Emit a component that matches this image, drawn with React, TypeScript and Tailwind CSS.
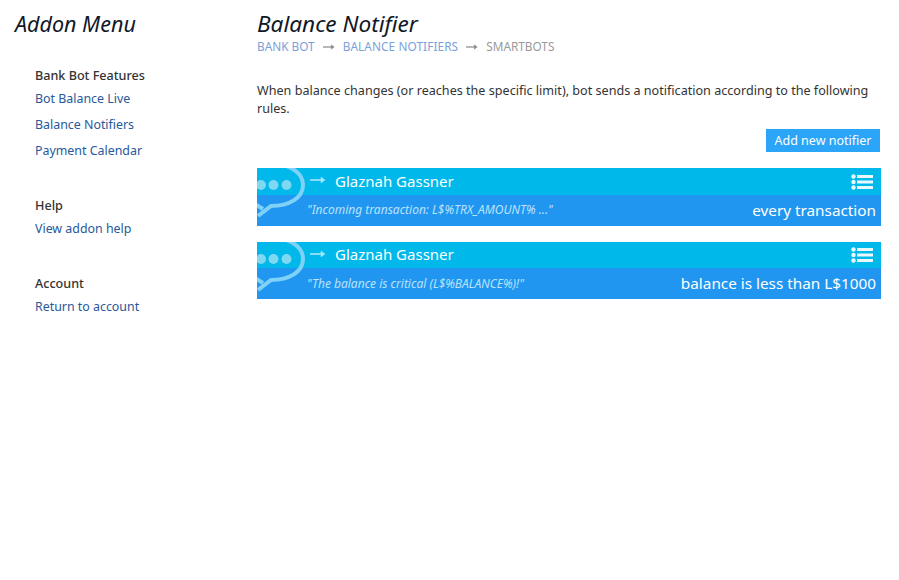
import React from "react";

const font = { fontFamily: '"Noto Sans", sans-serif' };

function SideGroup({ title, links, className }: { title: string; links: string[]; className?: string }) {
  return (
    <div className={className}>
      <div className="text-[12.6px] leading-[18px] font-medium text-[#333333]">{title}</div>
      <div className="mt-[5px] flex flex-col gap-[8px]">
        {links.map((l) => (
          <a key={l} className="text-[12.4px] leading-[18px] text-[#27589b]">
            {l}
          </a>
        ))}
      </div>
    </div>
  );
}

function Arrow({ className }: { className?: string }) {
  return (
    <svg viewBox="0 0 16 10" className={className} fill="none" stroke="currentColor">
      <path d="M0 5h13" strokeWidth="1.6" />
      <path d="M11 2l4 3-4 3z" fill="currentColor" strokeWidth="0.5" />
    </svg>
  );
}

function Bubble() {
  return (
    <svg width="50" height="57" viewBox="0 0 50 57" className="absolute left-0 top-0" fill="none">
      <path d="M10 -4C32 -5 46 4 46 17C46 30 32 38 14 38L1 48" stroke="#7fd2f7" strokeWidth="4" />
      <path d="M-2 36L6 41" stroke="#7fd2f7" strokeWidth="4" />
      <circle cx="4" cy="17" r="5" fill="#7fd8f2" />
      <circle cx="16.5" cy="17" r="5" fill="#7fd8f2" />
      <circle cx="29.5" cy="17" r="5" fill="#7fd8f2" />
    </svg>
  );
}

function ListIcon() {
  return (
    <svg width="22" height="16" viewBox="0 0 22 16" fill="#e8f8fd">
      <circle cx="2.5" cy="2.5" r="2.2" />
      <circle cx="2.5" cy="8" r="2.2" />
      <circle cx="2.5" cy="13.5" r="2.2" />
      <rect x="6" y="1" width="16" height="3" />
      <rect x="6" y="6.5" width="16" height="3" />
      <rect x="6" y="12" width="16" height="3" />
    </svg>
  );
}

function Card({ quote, rule, topH, nameClass, quoteClass }: { quote: string; rule: string; topH: string; nameClass: string; quoteClass: string }) {
  return (
    <div className="relative overflow-hidden w-[624px]">
      <div className={`${topH} bg-[#00b8e9] flex items-center pl-[53px] pr-[8px]`}>
        <Arrow className="w-[16px] h-[10px] text-[#a5e6f7] -mt-[3px]" />
        <span className={`ml-[9px] text-[15px] text-white ${nameClass}`}>Glaznah Gassner</span>
        <span className="ml-auto">
          <ListIcon />
        </span>
      </div>
      <div className="h-[31px] bg-[#2196f0] flex items-center pl-[50px] pr-[5px]">
        <span className={`italic text-[12px] text-[#b9e2fb] ${quoteClass}`}>{quote}</span>
        <span className="ml-auto text-[15.3px] text-white">{rule}</span>
      </div>
      <Bubble />
    </div>
  );
}

export default function App() {
  return (
    <div className="flex min-h-[580px] w-[899px] bg-white" style={font}>
      <aside className="w-[257px] shrink-0 pl-[15px] pt-[10px]">
        <h2 className="text-[21.5px] leading-[28px] italic text-[#111827]">Addon Menu</h2>
        <SideGroup className="mt-[29px] ml-[20px]" title="Bank Bot Features" links={["Bot Balance Live", "Balance Notifiers", "Payment Calendar"]} />
        <SideGroup className="mt-[37px] ml-[20px]" title="Help" links={["View addon help"]} />
        <SideGroup className="mt-[37px] ml-[20px]" title="Account" links={["Return to account"]} />
      </aside>
      <main className="w-[624px] pt-[10px]">
        <h1 className="text-[22.6px] leading-[28px] italic text-[#111827]">Balance Notifier</h1>
        <div className="flex items-center h-[18px] text-[11.8px] text-[#7ba1d9]">
          <span>BANK BOT</span>
          <Arrow className="w-[12px] h-[8px] mx-[8px] text-[#888888]" />
          <span className="tracking-[0.1px]">BALANCE NOTIFIERS</span>
          <Arrow className="w-[12px] h-[8px] mx-[8px] text-[#888888]" />
          <span className="text-[#999999]">SMARTBOTS</span>
        </div>
        <p className="mt-[26px] text-[12.6px] leading-[18px] text-[#333333]">
          When balance changes (or reaches the specific limit), bot sends a notification according to the following rules.
        </p>
        <div className="mt-[11px] flex justify-end pr-[1px]">
          <button className="h-[23px] w-[114px] bg-[#2ba5f7] pt-px text-[12.5px] text-white">Add new notifier</button>
        </div>
        <div className="mt-[16px] flex flex-col gap-[16px]">
          <Card topH="h-[27px]" nameClass="" quoteClass="-mt-[2px]" quote={'"Incoming transaction: L$%TRX_AMOUNT% ..."'} rule="every transaction" />
          <Card topH="h-[26px]" nameClass="-mt-[2px]" quoteClass="mt-0" quote={'"The balance is critical (L$%BALANCE%)!"'} rule="balance is less than L$1000" />
        </div>
      </main>
    </div>
  );
}
